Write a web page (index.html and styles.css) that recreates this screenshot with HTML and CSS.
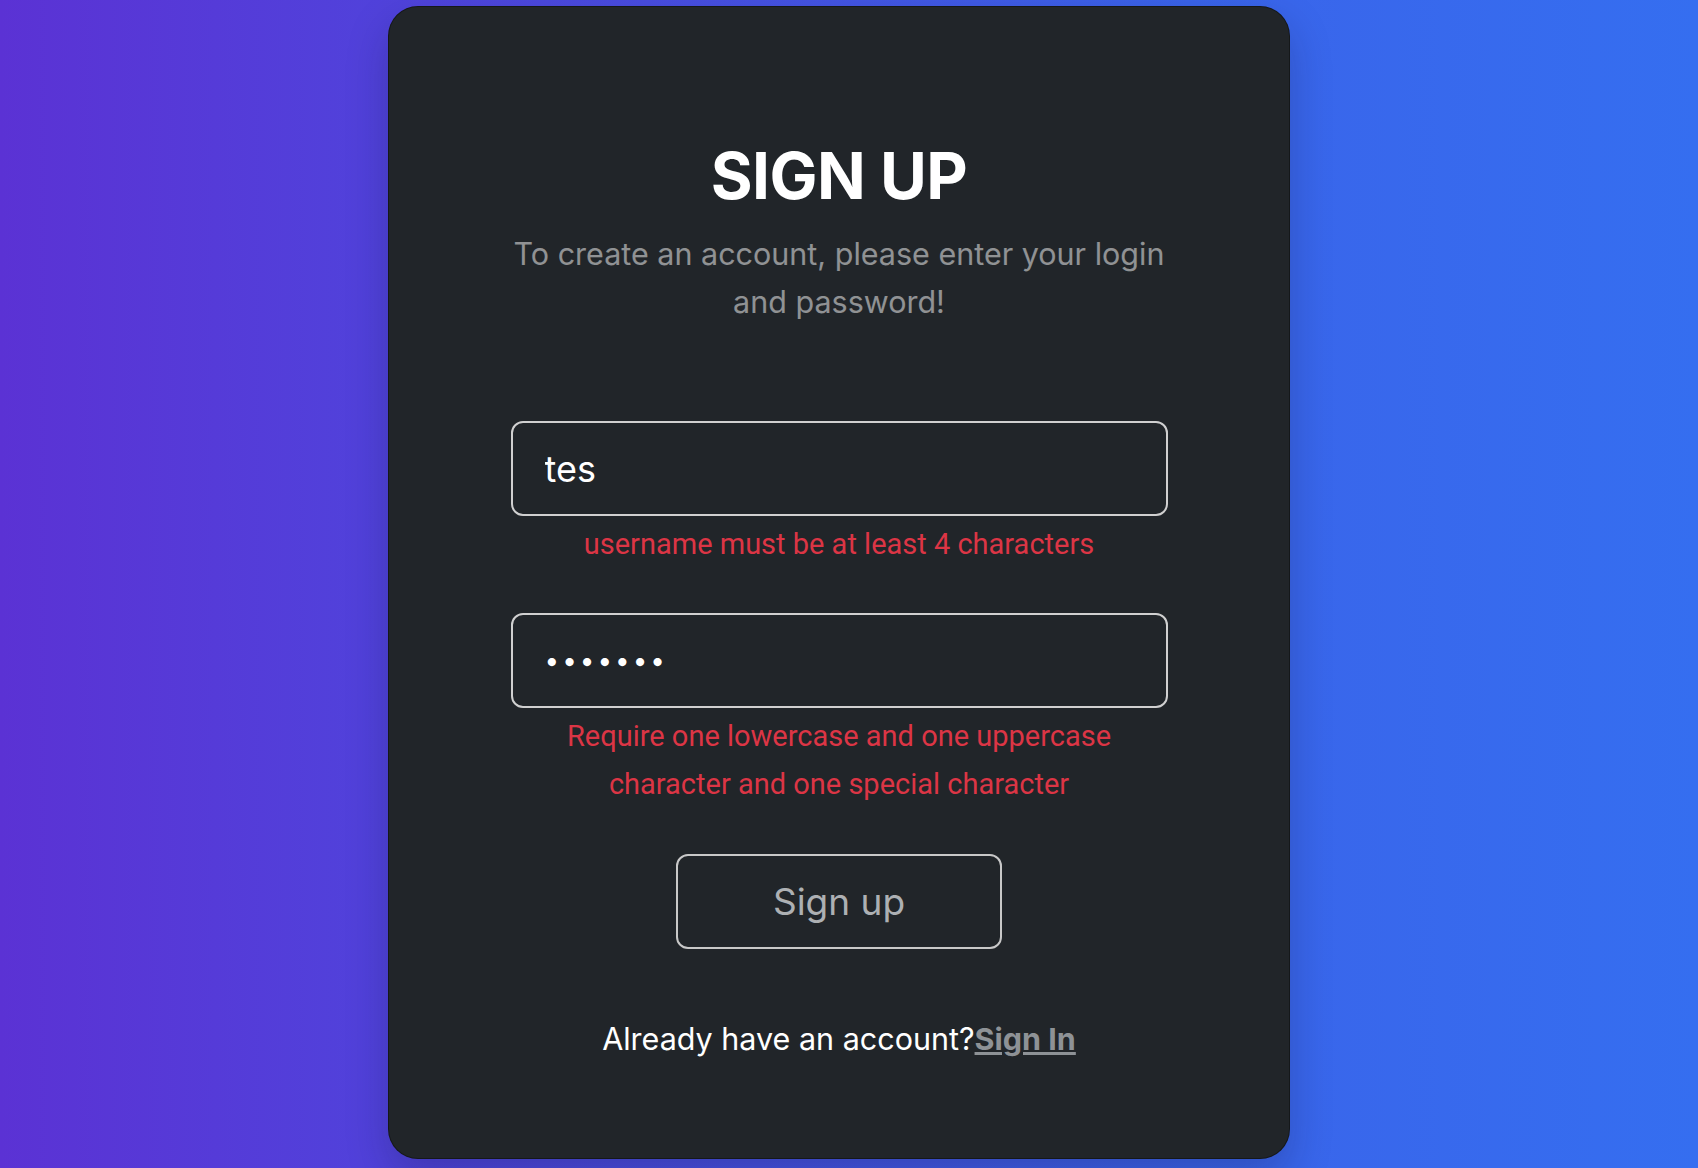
FILE: index.html
```html
<!DOCTYPE html>
<html lang="en">
<head>
    <meta charset="UTF-8">
    <meta name="viewport" content="width=device-width, initial-scale=1.0">
    <title>Sign Up</title>
    <link rel="stylesheet" href="styles.css">
</head>
<body>

    <!-- Tarjeta de registro -->
    <div class="page">
        <div class="card">
            <h2 class="title">SIGN UP</h2>
            <p class="subtitle">To create an account, please enter your login and password!</p>

            <form class="signup-form">
                <input type="text" class="field" name="username" value="tes">
                <div class="error">username must be at least 4 characters</div>

                <input type="password" class="field field-password" name="password" value="1234567">
                <div class="error error-wide">Require one lowercase and one uppercase character and one special character</div>

                <button type="submit" class="btn-signup">Sign up</button>
            </form>

            <p class="footer-text">Already have an account?<a href="#" class="signin-link">Sign In</a></p>
        </div>
    </div>

</body>
</html>
```

FILE: styles.css
```css
/* General */
* {
    margin: 0;
    padding: 0;
    box-sizing: border-box;
}

body {
    font-family: 'Inter', 'Noto Sans', sans-serif;
    background: linear-gradient(to right, #5b32d4, #3a64ea 70%, #356ef0);
    height: 1168px;
    overflow: hidden;
}

.page {
    padding-top: 6px;
    padding-left: 388px;
}

/* Card */
.card {
    width: 902px;
    height: 1153px;
    background-color: #212529;
    border: 1px solid rgba(0, 0, 0, 0.35);
    border-radius: 30px;
    box-shadow: 0 18px 40px rgba(20, 20, 60, 0.25);
    display: flex;
    flex-direction: column;
    align-items: center;
    padding-top: 137px;
    color: white;
}

.title {
    font-size: 64px;
    font-weight: 700;
    line-height: 1;
    letter-spacing: -0.5px;
}

.subtitle {
    margin-top: 22px;
    width: 680px;
    font-size: 30.5px;
    line-height: 48px;
    text-align: center;
    color: rgba(255, 255, 255, 0.5);
}

/* Form */
.signup-form {
    display: flex;
    flex-direction: column;
    align-items: center;
    margin-top: 95px;
}

.field {
    width: 657px;
    height: 95px;
    background-color: #212529;
    border: 2px solid #d0d0d0;
    border-radius: 12px;
    padding: 0 32px;
    font-family: 'Inter', sans-serif;
    font-size: 36px;
    color: white;
    outline: none;
}

.field-password {
    margin-top: 45px;
    font-size: 26px;
    letter-spacing: 3px;
}

.error {
    font-family: 'Roboto', sans-serif;
    font-size: 29px;
    line-height: 48px;
    color: #dc3545;
    text-align: center;
    margin-top: 4px;
}

.error-wide {
    width: 580px;
}

.btn-signup {
    margin-top: 46px;
    width: 326px;
    height: 95px;
    background: transparent;
    border: 2px solid #c8c8c8;
    border-radius: 12px;
    font-family: 'Inter', sans-serif;
    font-size: 37px;
    color: #adb0b3;
    cursor: pointer;
}

.footer-text {
    margin-top: 70px;
    font-size: 30.5px;
    line-height: 40px;
}

.signin-link {
    color: #8e9296;
    font-weight: 700;
}
```
